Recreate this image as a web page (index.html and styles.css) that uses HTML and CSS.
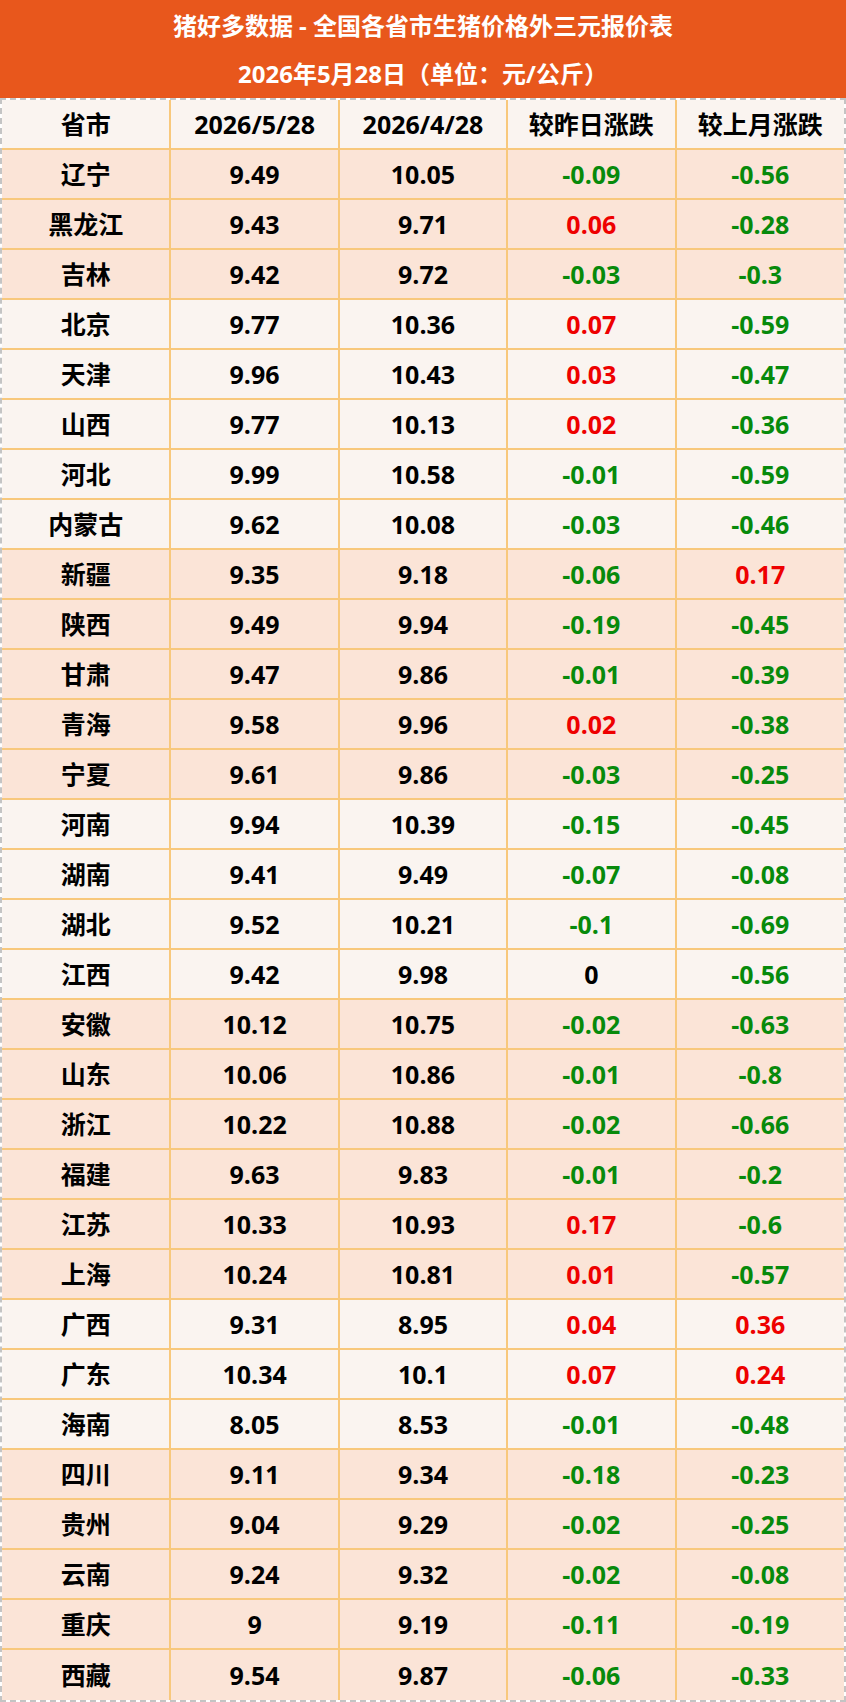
FILE: index.html
```html
<!DOCTYPE html>
<html lang="zh-CN">
<head>
<meta charset="utf-8">
<title>猪好多数据 - 全国各省市生猪价格外三元报价表</title>
<link rel="stylesheet" href="styles.css">
</head>
<body>
<div class="page">
  <header class="banner">
    <div class="banner-line">猪好多数据 - 全国各省市生猪价格外三元报价表</div>
    <div class="banner-line">2026年5月28日（单位：元/公斤）</div>
  </header>
  <div class="frame">
    <table class="prices">
      <thead>
        <tr class="light"><th>省市</th><th>2026/5/28</th><th>2026/4/28</th><th>较昨日涨跌</th><th>较上月涨跌</th></tr>
      </thead>
      <tbody>
        <tr class="peach"><td>辽宁</td><td>9.49</td><td>10.05</td><td class="dn">-0.09</td><td class="dn">-0.56</td></tr>
        <tr class="peach"><td>黑龙江</td><td>9.43</td><td>9.71</td><td class="up">0.06</td><td class="dn">-0.28</td></tr>
        <tr class="peach"><td>吉林</td><td>9.42</td><td>9.72</td><td class="dn">-0.03</td><td class="dn">-0.3</td></tr>
        <tr class="light"><td>北京</td><td>9.77</td><td>10.36</td><td class="up">0.07</td><td class="dn">-0.59</td></tr>
        <tr class="light"><td>天津</td><td>9.96</td><td>10.43</td><td class="up">0.03</td><td class="dn">-0.47</td></tr>
        <tr class="light"><td>山西</td><td>9.77</td><td>10.13</td><td class="up">0.02</td><td class="dn">-0.36</td></tr>
        <tr class="light"><td>河北</td><td>9.99</td><td>10.58</td><td class="dn">-0.01</td><td class="dn">-0.59</td></tr>
        <tr class="light"><td>内蒙古</td><td>9.62</td><td>10.08</td><td class="dn">-0.03</td><td class="dn">-0.46</td></tr>
        <tr class="peach"><td>新疆</td><td>9.35</td><td>9.18</td><td class="dn">-0.06</td><td class="up">0.17</td></tr>
        <tr class="peach"><td>陕西</td><td>9.49</td><td>9.94</td><td class="dn">-0.19</td><td class="dn">-0.45</td></tr>
        <tr class="peach"><td>甘肃</td><td>9.47</td><td>9.86</td><td class="dn">-0.01</td><td class="dn">-0.39</td></tr>
        <tr class="peach"><td>青海</td><td>9.58</td><td>9.96</td><td class="up">0.02</td><td class="dn">-0.38</td></tr>
        <tr class="peach"><td>宁夏</td><td>9.61</td><td>9.86</td><td class="dn">-0.03</td><td class="dn">-0.25</td></tr>
        <tr class="light"><td>河南</td><td>9.94</td><td>10.39</td><td class="dn">-0.15</td><td class="dn">-0.45</td></tr>
        <tr class="light"><td>湖南</td><td>9.41</td><td>9.49</td><td class="dn">-0.07</td><td class="dn">-0.08</td></tr>
        <tr class="light"><td>湖北</td><td>9.52</td><td>10.21</td><td class="dn">-0.1</td><td class="dn">-0.69</td></tr>
        <tr class="light"><td>江西</td><td>9.42</td><td>9.98</td><td>0</td><td class="dn">-0.56</td></tr>
        <tr class="peach"><td>安徽</td><td>10.12</td><td>10.75</td><td class="dn">-0.02</td><td class="dn">-0.63</td></tr>
        <tr class="peach"><td>山东</td><td>10.06</td><td>10.86</td><td class="dn">-0.01</td><td class="dn">-0.8</td></tr>
        <tr class="peach"><td>浙江</td><td>10.22</td><td>10.88</td><td class="dn">-0.02</td><td class="dn">-0.66</td></tr>
        <tr class="peach"><td>福建</td><td>9.63</td><td>9.83</td><td class="dn">-0.01</td><td class="dn">-0.2</td></tr>
        <tr class="peach"><td>江苏</td><td>10.33</td><td>10.93</td><td class="up">0.17</td><td class="dn">-0.6</td></tr>
        <tr class="peach"><td>上海</td><td>10.24</td><td>10.81</td><td class="up">0.01</td><td class="dn">-0.57</td></tr>
        <tr class="light"><td>广西</td><td>9.31</td><td>8.95</td><td class="up">0.04</td><td class="up">0.36</td></tr>
        <tr class="light"><td>广东</td><td>10.34</td><td>10.1</td><td class="up">0.07</td><td class="up">0.24</td></tr>
        <tr class="light"><td>海南</td><td>8.05</td><td>8.53</td><td class="dn">-0.01</td><td class="dn">-0.48</td></tr>
        <tr class="peach"><td>四川</td><td>9.11</td><td>9.34</td><td class="dn">-0.18</td><td class="dn">-0.23</td></tr>
        <tr class="peach"><td>贵州</td><td>9.04</td><td>9.29</td><td class="dn">-0.02</td><td class="dn">-0.25</td></tr>
        <tr class="peach"><td>云南</td><td>9.24</td><td>9.32</td><td class="dn">-0.02</td><td class="dn">-0.08</td></tr>
        <tr class="peach"><td>重庆</td><td>9</td><td>9.19</td><td class="dn">-0.11</td><td class="dn">-0.19</td></tr>
        <tr class="peach"><td>西藏</td><td>9.54</td><td>9.87</td><td class="dn">-0.06</td><td class="dn">-0.33</td></tr>
      </tbody>
    </table>
  </div>
</div>
</body>
</html>
```

FILE: styles.css
```css
html, body {
  margin: 0;
  padding: 0;
  background: #ffffff;
}

.page {
  width: 846px;
  font-family: "Open Sans", "Noto Sans CJK SC", sans-serif;
  font-weight: 700;
}

.banner {
  height: 98px;
  box-sizing: border-box;
  padding-top: 2px;
  background: #e8571c;
  color: #ffffff;
  display: flex;
  flex-direction: column;
}

.banner-line {
  height: 48px;
  display: flex;
  align-items: center;
  justify-content: center;
  font-size: 24px;
  font-weight: 700;
  line-height: 1;
}

.frame {
  border: 2px dashed #c4c4c4;
}

.prices {
  width: 100%;
  border-collapse: collapse;
  table-layout: fixed;
}

.prices th,
.prices td {
  height: 48px;
  padding: 0;
  text-align: center;
  vertical-align: middle;
  font-size: 25px;
  font-weight: 700;
  color: #000000;
  border-right: 2px solid #f8c87c;
  border-bottom: 2px solid #f8c87c;
  line-height: 1;
}

.prices th:last-child,
.prices td:last-child {
  border-right: none;
}

.prices tbody tr:last-child td {
  border-bottom: none;
  height: 50px;
}

.light {
  background: #faf4f0;
}

.peach {
  background: #fbe4d7;
}

.prices .dn {
  color: #078a0b;
}

.prices .up {
  color: #ee0000;
}
```
